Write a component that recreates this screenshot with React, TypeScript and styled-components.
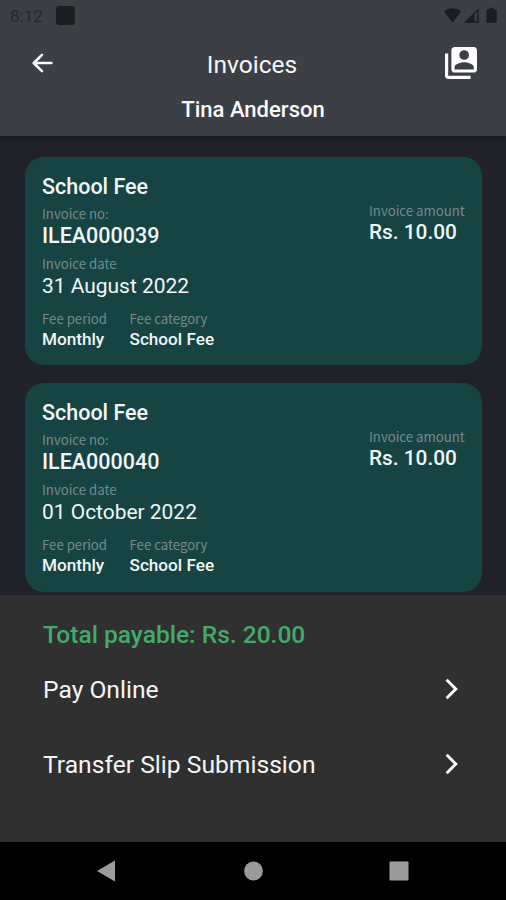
import React from 'react';
import styled, { createGlobalStyle } from 'styled-components';

const GlobalStyle = createGlobalStyle`
  *, *::before, *::after { box-sizing: border-box; }
  body { margin: 0; background: #000; }
`;

const Screen = styled.div`
  display: flex;
  flex-direction: column;
  width: 506px;
  height: 900px;
  overflow: hidden;
  background: #212229;
  color: #f3f5f6;
  font-family: Roboto, sans-serif;
  white-space: nowrap;
`;

const Header = styled.header`
  flex: none;
  height: 136px;
  background: #3d3f46;
  box-shadow: 0 1px 5px rgba(10, 11, 14, 0.6);
`;

const StatusBar = styled.div`
  display: flex;
  align-items: center;
  height: 31px;
  padding: 0 8px 0 10px;
  color: #1b1d1f;
`;

const Clock = styled.span`
  width: 46px;
  font-size: 17px;
  line-height: 20px;
  color: #27292d;
  padding-top: 1px;
`;

const NoticeSquare = styled.span`
  width: 19px;
  height: 19px;
  border-radius: 3px;
  background: #1b1d1e;
`;

const StatusIcons = styled.svg`
  margin-left: auto;
  width: 54px;
  height: 17px;
`;

const TitleRow = styled.div`
  display: grid;
  grid-template-columns: 60px 1fr 58px;
  align-items: center;
  height: 64px;
  padding: 0 29px 0 25px;
`;

const PageTitle = styled.h1`
  margin: 0;
  padding-top: 3px;
  font-size: 24.5px;
  font-weight: 400;
  line-height: 30px;
  text-align: center;
  color: #f5f6f8;
`;

const IconButton = styled.button<{ $end?: boolean }>`
  display: flex;
  justify-content: ${(p) => (p.$end ? 'flex-end' : 'flex-start')};
  padding: 0;
  border: 0;
  background: none;
  color: #fff;
`;

const StudentName = styled.h2`
  margin: 0;
  padding-top: 1px;
  font-size: 22.05px;
  font-weight: 500;
  line-height: 28px;
  text-align: center;
  color: #fafbfc;
`;

const InvoiceList = styled.main`
  flex: none;
  display: flex;
  flex-direction: column;
  gap: 18px;
  height: 459px;
  padding: 21px 24px 0 25px;
`;

const Card = styled.article`
  flex: none;
  display: flex;
  justify-content: space-between;
  height: 208.4px;
  padding: 17.5px 17px 0;
  border-radius: 19px;
  background: #154443;
`;

const Details = styled.div`
  display: flex;
  flex-direction: column;
`;

const CardTitle = styled.h3`
  margin: 0 0 7px;
  font-size: 21.5px;
  font-weight: 500;
  line-height: 24px;
`;

const Label = styled.span`
  display: block;
  font-family: 'Noto Sans CJK SC', sans-serif;
  font-size: 13.2px;
  line-height: 16px;
  color: #788a8c;
`;

const Field = styled.div<{ $gap?: number }>`
  margin-bottom: ${(p) => p.$gap ?? 0}px;
`;

const sizes = {
  number: { size: 21.5, weight: 500, line: 24, top: 2 },
  date: { size: 20.95, weight: 400, line: 24, top: 2.5 },
  small: { size: 17.15, weight: 500, line: 20, top: 2.5 },
  amount: { size: 20.8, weight: 500, line: 24, top: 1.2 },
};

const Value = styled.span<{ $kind: keyof typeof sizes }>`
  display: block;
  margin-top: ${(p) => sizes[p.$kind].top}px;
  font-size: ${(p) => sizes[p.$kind].size}px;
  font-weight: ${(p) => sizes[p.$kind].weight};
  line-height: ${(p) => sizes[p.$kind].line}px;
`;

const FieldPair = styled.div`
  display: grid;
  grid-template-columns: 87.5px auto;
`;

const Amount = styled.div`
  width: 96px;
  padding-top: 28.4px;
`;

const Footer = styled.section`
  flex: 1;
  background: #303030;
  padding: 25px 43px 0;
`;

const Total = styled.p`
  margin: 0 0 11px;
  font-size: 24.55px;
  font-weight: 500;
  line-height: 30px;
  color: #41ab67;
`;

const Action = styled.button`
  display: flex;
  align-items: center;
  justify-content: space-between;
  width: 100%;
  height: 56px;
  margin-bottom: 19px;
  padding: 0 3.5px 0 0;
  border: 0;
  background: none;
  color: #f5f5f5;
  font: 400 24.65px/30px Roboto, sans-serif;
  text-align: left;
`;

const ActionLabel = styled.span`
  padding-top: 2px;
`;

const NavBar = styled.nav`
  flex: none;
  display: flex;
  justify-content: space-between;
  align-items: center;
  height: 58px;
  padding: 0 97px 0 96px;
  background: #000;
`;

const invoices = [
  { number: 'ILEA000039', date: '31 August 2022' },
  { number: 'ILEA000040', date: '01 October 2022' },
];

function InvoiceCard({ number, date }: { number: string; date: string }) {
  return (
    <Card>
      <Details>
        <CardTitle>School Fee</CardTitle>
        <Field $gap={8}>
          <Label>Invoice no:</Label>
          <Value $kind="number">{number}</Value>
        </Field>
        <Field $gap={12.5}>
          <Label>Invoice date</Label>
          <Value $kind="date">{date}</Value>
        </Field>
        <FieldPair>
          <Field>
            <Label>Fee period</Label>
            <Value $kind="small">Monthly</Value>
          </Field>
          <Field>
            <Label>Fee category</Label>
            <Value $kind="small">School Fee</Value>
          </Field>
        </FieldPair>
      </Details>
      <Amount>
        <Label>Invoice amount</Label>
        <Value $kind="amount">Rs. 10.00</Value>
      </Amount>
    </Card>
  );
}

const Chevron = () => (
  <svg width="16" height="22" viewBox="0 0 16 22" fill="none" stroke="#fff" strokeWidth="2.9">
    <path d="M2.6 1.8 11.8 11 2.6 20.2" />
  </svg>
);

export default function App() {
  return (
    <>
      <GlobalStyle />
      <Screen>
        <Header>
          <StatusBar>
            <Clock>8:12</Clock>
            <NoticeSquare />
            <StatusIcons viewBox="0 0 54 17" fill="currentColor">
              <path d="M0 4.4C4.8.1 12.4.1 17.2 4.4L8.6 15.5Z" />
              <path d="M20 15.7 34.7 1V15.7Z" />
              <path d="M30.4 6.9 33.2 4.2v10.1h-2.8z" fill="#3d3f46" />
              <path d="M45.5.8h4v1.6h2.2q1 0 1 1v11.4q0 1-1 1h-8.2q-1 0-1-1V3.4q0-1 1-1h2z" />
            </StatusIcons>
          </StatusBar>
          <TitleRow>
            <IconButton aria-label="Back">
              <svg width="34" height="22" viewBox="0 0 34 22" fill="none" stroke="currentColor" strokeWidth="2.6" strokeLinecap="round" strokeLinejoin="round">
                <path d="M26.4 11H8.9M17 2.9 8.7 11 17 19.1" />
              </svg>
            </IconButton>
            <PageTitle>Invoices</PageTitle>
            <IconButton $end aria-label="Switch account">
              <svg width="32" height="32" viewBox="2 2 20 20" fill="currentColor">
                <path d="M4 6H2v14c0 1.1.9 2 2 2h14v-2H4V6zm16-4H8c-1.1 0-2 .9-2 2v12c0 1.1.9 2 2 2h12c1.1 0 2-.9 2-2V4c0-1.1-.9-2-2-2zm-6 2c1.66 0 3 1.34 3 3s-1.34 3-3 3-3-1.34-3-3 1.34-3 3-3zm6 12H8v-1.5c0-1.99 4-3 6-3s6 1.01 6 3V16z" />
              </svg>
            </IconButton>
          </TitleRow>
          <StudentName>Tina Anderson</StudentName>
        </Header>
        <InvoiceList>
          {invoices.map((invoice) => (
            <InvoiceCard key={invoice.number} {...invoice} />
          ))}
        </InvoiceList>
        <Footer>
          <Total>Total payable: Rs. 20.00</Total>
          <Action>
            <ActionLabel>Pay Online</ActionLabel>
            <Chevron />
          </Action>
          <Action>
            <ActionLabel>Transfer Slip Submission</ActionLabel>
            <Chevron />
          </Action>
        </Footer>
        <NavBar>
          <svg width="20" height="22" viewBox="0 0 20 22" fill="#9b9b9b">
            <path d="M1 11 19 .5v21z" />
          </svg>
          <svg width="20" height="20" viewBox="0 0 20 20" fill="#9b9b9b">
            <circle cx="10.5" cy="10" r="9.4" />
          </svg>
          <svg width="20" height="20" viewBox="0 0 20 20" fill="#9b9b9b">
            <rect x=".5" y=".5" width="19" height="19" rx="1" />
          </svg>
        </NavBar>
      </Screen>
    </>
  );
}
